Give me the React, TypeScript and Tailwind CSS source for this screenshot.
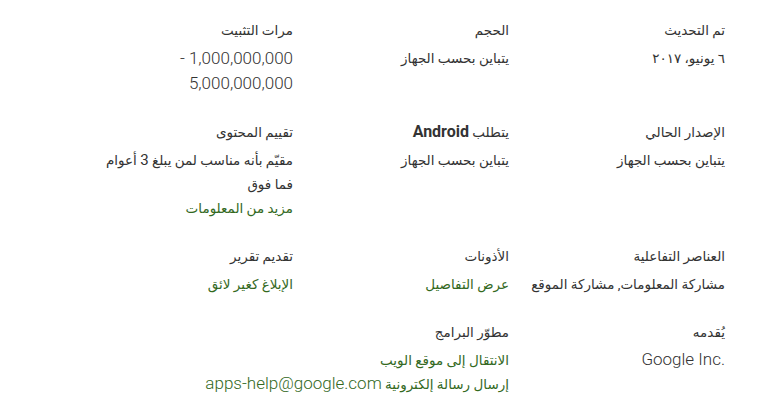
import type { ReactNode } from 'react';

type Cell = {
  title: ReactNode;
  lines: { text: ReactNode; link?: boolean; nowrap?: boolean }[];
};

const Latin = ({ children, bold }: { children: ReactNode; bold?: boolean }) => (
  <span
    dir="ltr"
    className={`leading-none ${bold ? 'font-bold text-[16px]' : 'font-light text-[17px]'}`}
  >
    {children}
  </span>
);

const rows: (Cell | null)[][] = [
  [
    { title: 'تم التحديث', lines: [{ text: '٦ يونيو، ٢٠١٧' }] },
    { title: 'الحجم', lines: [{ text: 'يتباين بحسب الجهاز' }] },
    {
      title: 'مرات التثبيت',
      lines: [{ text: <span className="text-[17px] font-light">1,000,000,000 - 5,000,000,000</span> }],
    },
  ],
  [
    { title: 'الإصدار الحالي', lines: [{ text: 'يتباين بحسب الجهاز' }] },
    {
      title: (
        <>
          يتطلب <Latin bold>Android</Latin>
        </>
      ),
      lines: [{ text: 'يتباين بحسب الجهاز' }],
    },
    {
      title: 'تقييم المحتوى',
      lines: [
        { text: <>مقيّم بأنه مناسب لمن يبلغ <span className="text-[15px] leading-none">3</span> أعوام فما فوق</> },
        { text: 'مزيد من المعلومات', link: true },
      ],
    },
  ],
  [
    { title: 'العناصر التفاعلية', lines: [{ text: 'مشاركة المعلومات, مشاركة الموقع' }] },
    { title: 'الأذونات', lines: [{ text: 'عرض التفاصيل', link: true }] },
    { title: 'تقديم تقرير', lines: [{ text: 'الإبلاغ كغير لائق', link: true }] },
  ],
  [
    { title: 'يُقدمه', lines: [{ text: <Latin>Google Inc.</Latin> }] },
    {
      title: 'مطوّر البرامج',
      lines: [
        { text: 'الانتقال إلى موقع الويب', link: true },
        {
          text: (
            <>
              إرسال رسالة إلكترونية <Latin>apps-help@google.com</Latin>
            </>
          ),
          link: true,
          nowrap: true,
        },
        { text: 'سياسة الخصوصية', link: true },
      ],
    },
    null,
  ],
];

function MetaInfo({ cell }: { cell: Cell | null }) {
  if (!cell) return <div />;
  return (
    <div className="pl-4">
      <div className="text-[#333] leading-6 h-6 mb-1">{cell.title}</div>
      {cell.lines.map((l, i) => (
        <div
          key={i}
          className={`leading-6 ${l.nowrap ? 'whitespace-nowrap h-6' : ''} ${
            l.link ? 'text-[#33691e]' : 'text-[#333]'
          }`}
        >
          {l.text}
        </div>
      ))}
    </div>
  );
}

export default function App() {
  return (
    <div className="w-[780px] h-[402px] overflow-hidden bg-white">
      <div
        dir="rtl"
        className="w-[648px] mr-[55px] ml-auto pt-[18px] grid grid-cols-3 gap-y-6 text-[13.5px]"
        style={{ fontFamily: 'Roboto, "DejaVu Sans", sans-serif' }}
      >
        {rows.flat().map((c, i) => (
          <MetaInfo key={i} cell={c} />
        ))}
      </div>
    </div>
  );
}
